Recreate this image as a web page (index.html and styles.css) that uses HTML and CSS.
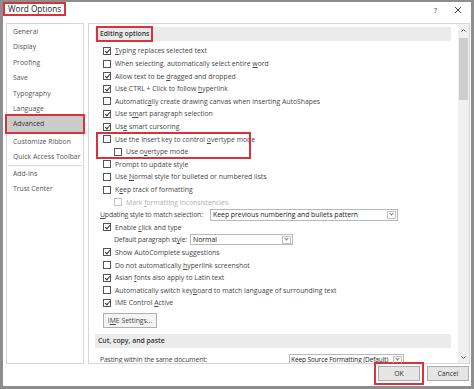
FILE: index.html
```html
<!DOCTYPE html>
<html lang="en">
<head>
    <meta charset="UTF-8">
    <title>Word Options</title>
    <link rel="stylesheet" href="styles.css">
</head>
<body>
    <div class="window">
        <div class="titlebar">
            <span class="title">Word Options</span>
            <div class="controls">
                <span class="help">?</span>
                <svg class="close" width="8" height="8" viewBox="0 0 8 8"><path d="M1 1L7 7M7 1L1 7" stroke="#444" stroke-width="1"/></svg>
            </div>
        </div>

        <div class="body">
            <nav class="nav">
                <div class="nav-item">General</div>
                <div class="nav-item">Display</div>
                <div class="nav-item">Proofing</div>
                <div class="nav-item">Save</div>
                <div class="nav-item">Typography</div>
                <div class="nav-item">Language</div>
                <div class="nav-item active">Advanced</div>
                <div class="nav-sep"></div>
                <div class="nav-item">Customize Ribbon</div>
                <div class="nav-item">Quick Access Toolbar</div>
                <div class="nav-sep"></div>
                <div class="nav-item">Add-Ins</div>
                <div class="nav-item">Trust Center</div>
            </nav>

            <div class="main">
                <div class="content">
                    <div class="section"><span class="section-title marked">Editing options</span></div>

                    <div class="opts">
                        <div class="opt"><span class="check on"></span><span><u>T</u>yping replaces selected text</span></div>
                        <div class="opt"><span class="check"></span><span>When selecting, automatically select entire <u>w</u>ord</span></div>
                        <div class="opt"><span class="check on"></span><span>Allow text to be <u>d</u>ragged and dropped</span></div>
                        <div class="opt"><span class="check on"></span><span>Use CTRL + Click to follow <u>h</u>yperlink</span></div>
                        <div class="opt"><span class="check"></span><span>Automatic<u>a</u>lly create drawing canvas when inserting AutoShapes</span></div>
                        <div class="opt"><span class="check on"></span><span>Use s<u>m</u>art paragraph selection</span></div>
                        <div class="opt"><span class="check on"></span><span>Us<u>e</u> smart cursoring</span></div>
                        <div class="group-marked">
                            <div class="opt"><span class="check"></span><span>Use the Insert key to control <u>o</u>vertype mode</span></div>
                            <div class="opt sub"><span class="check"></span><span>Use o<u>v</u>ertype mode</span></div>
                        </div>
                        <div class="opt"><span class="check"></span><span>Prompt to update st<u>y</u>le</span></div>
                        <div class="opt"><span class="check"></span><span>Use <u>N</u>ormal style for bulleted or numbered lists</span></div>
                        <div class="opt"><span class="check"></span><span>K<u>e</u>ep track of formatting</span></div>
                        <div class="opt sub disabled"><span class="check"></span><span>Mark <u>f</u>ormatting inconsistencies</span></div>
                        <div class="field">
                            <span class="field-label updating"><u>U</u>pdating style to match selection:</span>
                            <div class="select wide"><span class="select-text">Keep previous numbering and bullets pattern</span><span class="select-arrow"></span></div>
                        </div>
                        <div class="opt"><span class="check on"></span><span>Enable <u>c</u>lick and type</span></div>
                        <div class="field indent">
                            <span class="field-label para">Default paragraph st<u>y</u>le:</span>
                            <div class="select narrow"><span class="select-text">Normal</span><span class="select-arrow"></span></div>
                        </div>
                        <div class="opt"><span class="check on"></span><span>Show AutoComplete suggestions</span></div>
                        <div class="opt"><span class="check"></span><span>Do not automatically <u>h</u>yperlink screenshot</span></div>
                        <div class="opt"><span class="check on"></span><span>Asian <u>f</u>onts also apply to Latin text</span></div>
                        <div class="opt"><span class="check"></span><span>Automatically switch key<u>b</u>oard to match language of surrounding text</span></div>
                        <div class="opt"><span class="check on"></span><span>IME Control <u>A</u>ctive</span></div>
                    </div>

                    <button class="ime-btn">I<u>M</u>E Settings...</button>

                    <div class="section cut"><span class="section-title">Cut, copy, and paste</span></div>

                    <div class="field paste">
                        <span class="field-label pasting">Pasting <u>w</u>ithin the same document:</span>
                        <div class="select source"><span class="select-text">Keep Source Formatting (Default)</span><span class="select-arrow"></span></div>
                    </div>
                </div>

                <div class="scrollbar">
                    <div class="sb-btn"><svg width="5" height="3" viewBox="0 0 5 3"><path d="M0.5 2.6L2.5 0.6L4.5 2.6" fill="none" stroke="#555" stroke-width="1"/></svg></div>
                    <div class="sb-thumb"></div>
                    <div class="sb-btn bottom"><svg width="5" height="3" viewBox="0 0 5 3"><path d="M0.5 0.4L2.5 2.4L4.5 0.4" fill="none" stroke="#555" stroke-width="1"/></svg></div>
                </div>
            </div>
        </div>

        <div class="footer">
            <button class="btn ok">OK</button>
            <button class="btn">Cancel</button>
        </div>
    </div>
</body>
</html>
```

FILE: styles.css
```css
body {
    margin: 0;
    font-family: "Open Sans", "Noto Sans", sans-serif;
    font-size: 6.85px;
    color: #474747;
    background: #fff;
}

.window {
    width: 474px;
    height: 389px;
    box-sizing: border-box;
    border: 3px solid #8e8e8e;
    border-top-width: 2px;
    background: #fff;
    display: flex;
    flex-direction: column;
}

.titlebar {
    height: 21px;
    flex-shrink: 0;
    display: flex;
    align-items: flex-start;
    justify-content: space-between;
}

.title {
    font-size: 8.2px;
    color: #222;
    border: 2px solid #d8333b;
    padding: 0 3px;
    height: 10px;
    line-height: 10px;
}

.controls {
    display: flex;
    align-items: center;
    gap: 17px;
    height: 16px;
    padding-right: 9px;
}

.help {
    font-size: 7px;
    color: #444;
}

.body {
    flex: 1;
    min-height: 0;
    display: flex;
    gap: 4px;
    padding: 0 1px 0 3px;
}

.nav {
    width: 78px;
    flex-shrink: 0;
    box-sizing: border-box;
    border: 1px solid #d6d6d6;
}

.nav-item {
    height: 15.4px;
    line-height: 15.4px;
    padding-left: 6px;
    color: #555;
    white-space: nowrap;
    overflow: hidden;
}

.nav-item.active {
    background: #cbcbcb;
    color: #333;
    outline: 2px solid #d8333b;
    outline-offset: 0;
}

.nav-sep {
    height: 1px;
    background: #d6d6d6;
    margin: 0.4px 1px;
}

.main {
    flex: 1;
    min-width: 0;
    border: 1px solid #d6d6d6;
    display: flex;
    overflow: hidden;
}

.content {
    flex: 1;
    min-width: 0;
    padding: 3px 7px 0 6px;
    overflow: hidden;
}

.section {
    height: 14px;
    background: #ebebeb;
    display: flex;
    align-items: center;
}

.section-title {
    font-weight: 600;
    color: #333;
    padding-left: 3px;
}

.section-title.marked {
    margin-left: 1px;
    padding: 0 2px;
    height: 12px;
    line-height: 12px;
    border: 2px solid #d8333b;
    margin-top: -1px;
}

.opts {
    margin-top: 3.7px;
}

.opt {
    height: 12.6px;
    display: flex;
    align-items: center;
    gap: 4px;
    padding-left: 8px;
    white-space: nowrap;
}

.opt.sub {
    padding-left: 19px;
}

.opt.disabled {
    color: #b0b0b0;
}

.opt.disabled .check {
    border-color: #c4c4c4;
}

.check {
    width: 8px;
    height: 8px;
    box-sizing: border-box;
    border: 1px solid #555;
    background: #fff;
    flex-shrink: 0;
    position: relative;
}

.check.on::after {
    content: "";
    position: absolute;
    left: 1.5px;
    top: 0px;
    width: 2px;
    height: 4px;
    border-right: 1px solid #333;
    border-bottom: 1px solid #333;
    transform: rotate(40deg);
}

.group-marked {
    margin-left: 2px;
    width: 153px;
    outline: 2px solid #d8333b;
    outline-offset: -1px;
}

.group-marked .opt {
    padding-left: 6px;
}

.group-marked .opt.sub {
    padding-left: 17px;
}

.field {
    height: 12.6px;
    display: flex;
    align-items: center;
    padding-left: 5px;
    white-space: nowrap;
}

.field.indent {
    padding-left: 19px;
}

.field-label {
    flex-shrink: 0;
    letter-spacing: -0.15px;
}

.field-label.updating {
    width: 110px;
}

.field-label.para {
    width: 76px;
}

.field-label.pasting {
    width: 189px;
}

.select {
    flex-shrink: 0;
    height: 12px;
    box-sizing: border-box;
    border: 1px solid #b8b8b8;
    background: #fff;
    display: flex;
    align-items: center;
    color: #222;
}

.select.wide {
    width: 188px;
}

.select.narrow {
    width: 103px;
    height: 11px;
}

.select.source {
    width: 115px;
    height: 11px;
}

.select-text {
    flex: 1;
    padding-left: 2px;
    overflow: hidden;
}

.select-arrow {
    flex-shrink: 0;
    width: 9px;
    height: 8px;
    box-sizing: border-box;
    border: 1px solid #c4c4c4;
    margin-right: 1px;
    position: relative;
}

.select-arrow::after {
    content: "";
    position: absolute;
    left: 2px;
    top: 0.5px;
    width: 2px;
    height: 2px;
    border-right: 1px solid #777;
    border-bottom: 1px solid #777;
    transform: rotate(45deg);
}

.ime-btn {
    display: block;
    margin: 3.7px 0 0 8px;
    width: 54px;
    height: 15px;
    padding: 0;
    border: 1px solid #b0b0b0;
    background: #f4f4f4;
    font-family: inherit;
    font-size: 6.85px;
    color: #444;
}

.section.cut {
    margin-top: 6px;
}

.field.paste {
    margin-top: 5.7px;
}

.field.paste .select-text {
    padding-left: 1px;
    font-size: 6.5px;
    letter-spacing: -0.1px;
}

.scrollbar {
    width: 11px;
    flex-shrink: 0;
    background: #f0f0f0;
    display: flex;
    flex-direction: column;
}

.sb-btn {
    height: 12px;
    display: flex;
    align-items: center;
    justify-content: center;
}

.sb-btn.bottom {
    margin-top: auto;
}

.sb-thumb {
    height: 62px;
    margin: 2px 1px 0;
    background: #cdcdcd;
}

.footer {
    height: 20px;
    flex-shrink: 0;
    display: flex;
    justify-content: flex-end;
    align-items: flex-start;
    gap: 7px;
    padding: 2px 2px 0 0;
}

.btn {
    width: 42px;
    height: 15px;
    padding: 0;
    border: 1px solid #adadad;
    background: #e5e5e5;
    font-family: inherit;
    font-size: 6.85px;
    color: #333;
}

.btn.ok {
    outline: 2px solid #d8333b;
    outline-offset: 2px;
}
```
